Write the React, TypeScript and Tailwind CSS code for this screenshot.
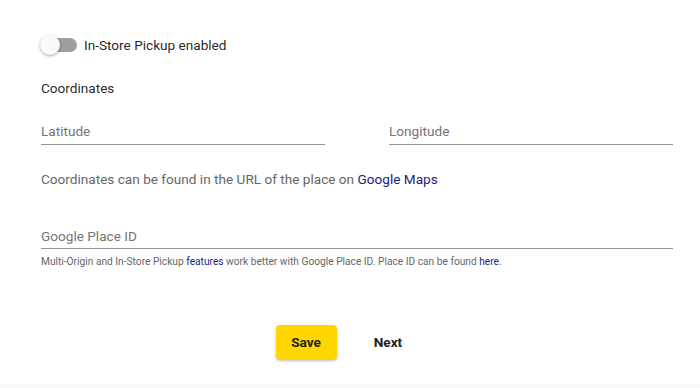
import { useState } from 'react'

export default function App() {
  const [pickup, setPickup] = useState(false)

  return (
    <div className="w-[700px] h-[388px] bg-white flex flex-col font-['Roboto',sans-serif] text-[rgba(0,0,0,0.87)] overflow-hidden">
      <div className="flex-1 pl-[41px] pr-[27px] pt-[35px]">
        {/* Pickup switch */}
        <div className="flex items-center h-5">
          <button
            className="relative w-[38px] h-5 shrink-0"
            onClick={() => setPickup(!pickup)}
          >
            <span className="absolute left-[2px] top-[3px] w-[34px] h-[14px] rounded-full bg-[#9e9e9e]" />
            <span
              className={`absolute top-0 w-5 h-5 rounded-full bg-[#fafafa] shadow-[0_1px_3px_rgba(0,0,0,0.35)] ${
                pickup ? 'left-[18px]' : '-left-[1px]'
              }`}
            />
          </button>
          <span className="ml-[5px] text-[13.6px] leading-5">In-Store Pickup enabled</span>
        </div>

        <div className="mt-[23px] text-[13.6px] leading-5">Coordinates</div>

        {/* Lat / lng */}
        <div className="mt-[23px] flex gap-[64px]">
          <div className="w-[284px] border-b border-[#949494] pb-[3px]">
            <input
              placeholder="Latitude"
              className="block w-full text-[13.6px] leading-5 h-5 outline-none placeholder:text-[#757575]"
            />
          </div>
          <div className="w-[284px] border-b border-[#949494] pb-[3px]">
            <input
              placeholder="Longitude"
              className="block w-full text-[13.6px] leading-5 h-5 outline-none placeholder:text-[#757575]"
            />
          </div>
        </div>

        <p className="mt-[24px] text-[13.6px] leading-5 text-[#666]">
          Coordinates can be found in the URL of the place on{' '}
          <a className="text-[#1a237e]">Google Maps</a>
        </p>

        {/* Place ID */}
        <div className="mt-[37px] border-b border-[#949494] pb-[2px]">
          <input
            placeholder="Google Place ID"
            className="block w-full text-[13.6px] leading-5 h-5 outline-none placeholder:text-[#757575]"
          />
        </div>
        <p className="mt-[6px] text-[10.2px] leading-[14px] text-[#666]">
          Multi-Origin and In-Store Pickup <a className="text-[#1a237e]">features</a> work better with
          Google Place ID. Place ID can be found <a className="text-[#1a237e]">here</a>.
        </p>

        {/* Actions */}
        <div className="mt-[56px] flex justify-center gap-[21px] pr-[20px]">
          <button className="w-[61px] h-[34px] rounded-[4px] bg-[#ffd600] text-[13.6px] font-bold text-[#212121] shadow-[0_2px_3px_rgba(0,0,0,0.25)]">
            Save
          </button>
          <button className="w-[61px] h-[34px] text-[13.6px] font-bold text-[#212121]">Next</button>
        </div>
      </div>
      <div className="h-[4px] bg-[#fafafa]" />
    </div>
  )
}
